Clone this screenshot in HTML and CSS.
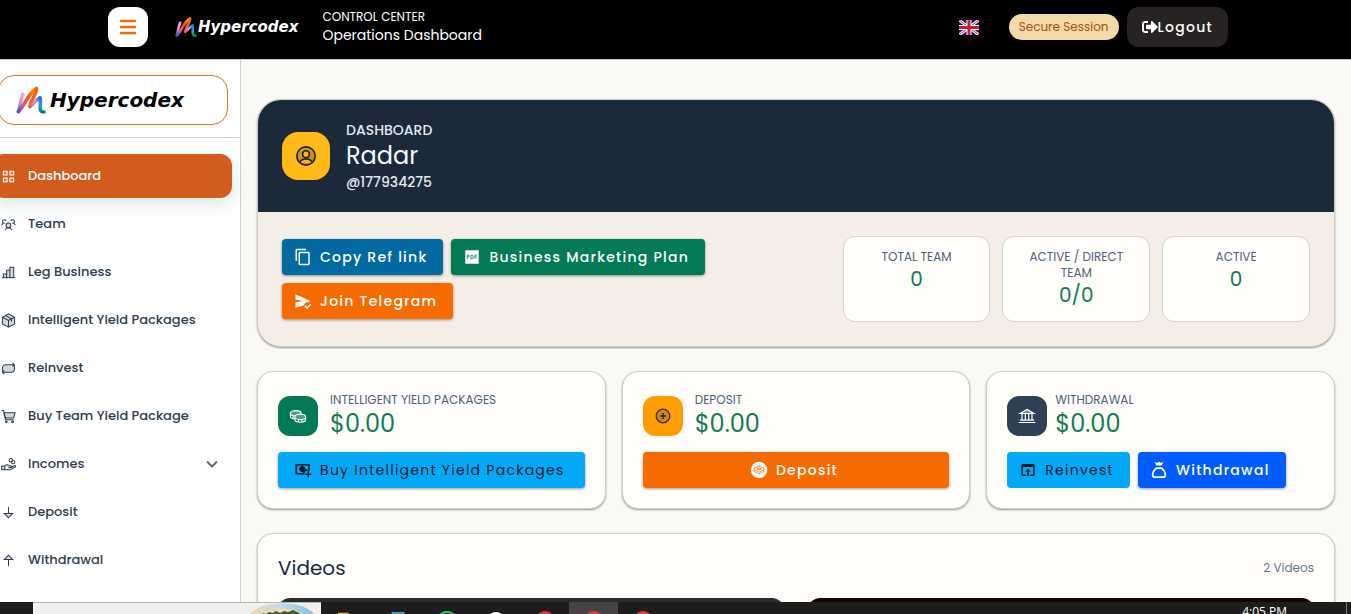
FILE: index.html
```html
<!DOCTYPE html>
<html lang="en">
<head>
<meta charset="utf-8">
<meta name="viewport" content="width=device-width, initial-scale=1">
<title>Hypercodex - Operations Dashboard</title>
<link rel="stylesheet" href="styles.css">
</head>
<body>
<svg class="defs" aria-hidden="true">
  <defs>
    <linearGradient id="gPink" x1="0" y1="0" x2="0" y2="1"><stop offset="0" stop-color="#f3a6c4"/><stop offset=".5" stop-color="#b79be0"/><stop offset="1" stop-color="#2a5fd0"/></linearGradient>
    <linearGradient id="gOrange" x1="1" y1="0" x2="0" y2="1"><stop offset="0" stop-color="#ffb400"/><stop offset=".4" stop-color="#f4511e"/><stop offset=".75" stop-color="#f0506e"/><stop offset="1" stop-color="#3b5bd6"/></linearGradient>
    <linearGradient id="gMid" x1="1" y1="0" x2="0" y2="1"><stop offset="0" stop-color="#3d7be8"/><stop offset=".5" stop-color="#c99be6"/><stop offset="1" stop-color="#ee5a5a"/></linearGradient>
    <linearGradient id="gBlue" x1="0" y1="0" x2="0" y2="1"><stop offset="0" stop-color="#2f6bea"/><stop offset=".55" stop-color="#1aa7e8"/><stop offset="1" stop-color="#0b8a50"/></linearGradient>
    <symbol id="mark" viewBox="0 0 30 28">
      <g fill="none" stroke-linecap="round" stroke-linejoin="round" stroke-width="3.600">
        <path d="M2.500 25.500C5 19 4 13 7 8.500" stroke="url(#gPink)"/>
        <path d="M2.500 25.500C9 19 13 6 20.500 2.500" stroke="url(#gOrange)"/>
        <path d="M20.500 2.500C21 7 15 14 14 20" stroke="#f4601c"/>
        <path d="M14 20.500C17 18.500 20 13.500 24 12" stroke="url(#gMid)"/>
        <path d="M24 12C26 16 21 26 28 26" stroke="url(#gBlue)"/>
      </g>
    </symbol>
  </defs>
</svg>

<header class="topbar">
  <button class="menu-btn" type="button" aria-label="Toggle menu">
    <svg viewBox="0 0 18 18" width="18" height="18"><path d="M2 3h14M2 9h14M2 15h14" stroke="#ea6d13" stroke-width="2.400" stroke-linecap="round"/></svg>
  </button>
  <a class="brand brand-top" href="#"><svg class="mark"><use href="#mark"/></svg><span>Hypercodex</span></a>
  <div class="titles">
    <span class="eyebrow">CONTROL CENTER</span>
    <span class="title">Operations Dashboard</span>
  </div>
  <div class="topbar-right">
    <svg class="flag" viewBox="0 0 60 45" role="img" aria-label="English">
      <path fill="#012169" d="M0 0h60v45H0z"/>
      <path d="M0 0l60 45M60 0L0 45" stroke="#fff" stroke-width="9"/>
      <path d="M0 0l60 45M60 0L0 45" stroke="#d8143a" stroke-width="3"/>
      <path d="M30 0v45M0 22.500h60" stroke="#fff" stroke-width="15"/>
      <path d="M30 0v45M0 22.500h60" stroke="#d8143a" stroke-width="9"/>
    </svg>
    <span class="session">Secure Session</span>
    <button class="logout" type="button">
      <svg viewBox="0 0 512 512" width="16" height="16" fill="currentColor"><path d="M497 273L329 441c-15 15-41 4.500-41-17v-96H152c-13 0-24-11-24-24v-96c0-13 11-24 24-24h136V88c0-21 26-32 41-17l168 168c9 9 9 25 0 34zM192 436v-40c0-7-5-12-12-12H96c-18 0-32-14-32-32V160c0-18 14-32 32-32h84c7 0 12-5 12-12V76c0-7-5-12-12-12H96c-53 0-96 43-96 96v192c0 53 43 96 96 96h84c7 0 12-5 12-12z"/></svg>Logout</button>
  </div>
</header>

<div class="shell">
  <aside class="sidebar">
    <div class="side-head"><a class="brand brand-side" href="#"><svg class="mark"><use href="#mark"/></svg><span>Hypercodex</span></a></div>
    <nav class="nav">
      <a class="nav-item active" href="#"><svg class="ni" viewBox="0 0 16 16"><path class="tint" d="M2.500 2.500h4v4h-4zM9.500 2.500h4v4h-4zM2.500 9.500h4v4h-4zM9.500 9.500h4v4h-4z"/></svg>Dashboard</a>
      <a class="nav-item" href="#"><svg class="ni" viewBox="0 0 16 16"><circle class="tint" cx="8" cy="9" r="2.500"/><path d="M4.300 14a4 4 0 0 1 7.400 0M5.500 4.200a2 2 0 1 0-3 2.300M.6 8.800c.5-1.500 1.700-2.300 3.400-2.300M10.500 4.200a2 2 0 1 1 3 2.300M15.400 8.800c-.5-1.500-1.700-2.300-3.400-2.300"/></svg>Team</a>
      <a class="nav-item" href="#"><svg class="ni" viewBox="0 0 16 16"><path class="tint" d="M2.500 13.500V9.500h3.500v4M6 13.500v-8h3.500v8M9.500 13.500v-11h4v11"/><path d="M1 13.500h14"/></svg>Leg Business</a>
      <a class="nav-item" href="#"><svg class="ni" viewBox="0 0 16 16"><path class="tint" d="M8 1l6.500 3.500v7.300L8 15.200l-6.500-3.400V4.500z"/><path d="M1.500 4.500L8 8l6.500-3.500M8 8v7M4.800 2.800l6.500 3.600v3"/></svg>Intelligent Yield Packages</a>
      <a class="nav-item" href="#"><svg class="ni" viewBox="0 0 16 16"><path class="tint" d="M1.500 8c0-2.500 1.500-4 4-4H14l.5 4c0 2.500-1.500 4-4 4H2z"/><path d="M12.300 2l2 2-2 2M3.700 10l-2 2 2 2"/></svg>Reinvest</a>
      <a class="nav-item" href="#"><svg class="ni" viewBox="0 0 16 16"><path class="tint" d="M3.300 4H15l-1.500 5.500H4.500z"/><path d="M.7 1.700h2L5 11.500h8.500"/><circle cx="5.700" cy="13.700" r="1"/><circle cx="12.300" cy="13.700" r="1"/></svg>Buy Team Yield Package</a>
      <a class="nav-item" href="#"><svg class="ni" viewBox="0 0 16 16"><path class="tint" d="M4 9.500c2-2 4-1 5 0h2c1 0 1 1.800 0 1.800H8M11.500 10.500l3-1.300c1.200-.4 1.500 1 .5 1.500l-5 3H.7V9.700H4v4"/><circle cx="13" cy="5.500" r="1.800"/><circle cx="10.500" cy="3.500" r="1.800"/></svg>Incomes
        <svg class="chev" viewBox="0 0 14 14"><path d="M2 4.500l5 5 5-5"/></svg></a>
      <a class="nav-item" href="#"><svg class="ni" viewBox="0 0 16 16"><path class="tint" d="M3.500 9h9L8 13.700z"/><path d="M8 2v7"/></svg>Deposit</a>
      <a class="nav-item" href="#"><svg class="ni" viewBox="0 0 16 16"><path class="tint" d="M3.500 7h9L8 2.300z"/><path d="M8 14V7"/></svg>Withdrawal</a>
    </nav>
  </aside>

  <main class="main">
    <section class="hero">
      <div class="hero-head">
        <span class="avatar"><svg viewBox="0 0 24 24" width="22" height="22" fill="none" stroke="#1c1f27" stroke-width="1.800"><circle cx="12" cy="12" r="10" fill="#c8941a"/><path d="M5.500 19c1.500-5 11.500-5 13 0" fill="#ffba18"/><circle cx="12" cy="10" r="3.700" fill="#ffba18"/></svg></span>
        <div class="who">
          <span class="who-label">DASHBOARD</span>
          <h1>Radar</h1>
          <span class="who-label">@177934275</span>
        </div>
      </div>
      <div class="hero-body">
        <div class="actions">
          <button class="btn blue" type="button"><svg viewBox="0 0 24 24"><path fill="currentColor" d="M16 1H4c-1.100 0-2 .9-2 2v14h2V3h12V1zm3 4H8c-1.100 0-2 .9-2 2v14c0 1.100.9 2 2 2h11c1.100 0 2-.9 2-2V7c0-1.100-.9-2-2-2zm0 16H8V7h11v14z"/></svg>Copy Ref link</button>
          <button class="btn green" type="button"><svg viewBox="0 0 24 24"><path fill="currentColor" d="M3 3h18v18H3z"/><path d="M5.500 14.500V9.500H8v2.500H5.500M10.500 9.500h1.500l1.500 1v3l-1.500 1h-1.500zM16 14.500v-5h3M16 12h2.500" fill="none" stroke="#027a55" stroke-width="1"/></svg>Business Marketing Plan</button>
          <button class="btn orange" type="button"><svg viewBox="0 0 24 24"><path fill="currentColor" d="M2 3l20 9-3.500 1.600-3 .4-3 4L2 21v-7l10-2-10-2z"/><path d="M14.500 18.500l3 3 5-5.500" fill="none" stroke="currentColor" stroke-width="2"/></svg>Join Telegram</button>
        </div>
        <div class="stats">
          <div class="stat"><span>TOTAL TEAM</span><strong>0</strong></div>
          <div class="stat"><span>ACTIVE / DIRECT TEAM</span><strong>0/0</strong></div>
          <div class="stat"><span>ACTIVE</span><strong>0</strong></div>
        </div>
      </div>
    </section>

    <div class="cards">
      <section class="card">
        <div class="card-top">
          <span class="tile tile-green"><svg viewBox="0 0 20 20" width="18" height="18" fill="none" stroke="#fff" stroke-width="1.200"><path d="M1.500 7v3.500c0 1.500 2.500 2.800 6 2.800"/><ellipse cx="7.500" cy="7" rx="6" ry="3" fill="#4aa184"/><path d="M4.500 10v2.500M6.500 11.500V14c0 1.500 2.500 3 6 3s6-1.500 6-3v-3"/><ellipse cx="12.500" cy="11" rx="6" ry="3" fill="#4aa184"/><path d="M10.500 14v2.600M14.500 14v2.600"/></svg></span>
          <div class="figure"><span>INTELLIGENT YIELD PACKAGES</span><strong>$0.00</strong></div>
        </div>
        <button class="btn sky wide" type="button"><svg viewBox="0 0 24 24"><path fill="currentColor" fill-rule="evenodd" d="M2 4h19v9h-3a4 4 0 0 0-4 5H2zM4 7v8a2 2 0 0 1 2 1h6v-1.500A4 4 0 1 1 15 10l2 1.500h2V7a2 2 0 0 1-1-1H6a2 2 0 0 1-2 1z"/><circle cx="11" cy="11" r="2.700" fill="currentColor"/><path d="M19 13.500v8M15 17.500h8" fill="none" stroke="currentColor" stroke-width="2"/></svg>Buy Intelligent Yield Packages</button>
      </section>
      <section class="card">
        <div class="card-top">
          <span class="tile tile-amber"><svg viewBox="0 0 16 16" width="16" height="16" fill="none" stroke="#3a2a10" stroke-width="1.300"><circle cx="8" cy="8" r="6.800" fill="#d18713"/><path d="M8 5v6M5 8h6" stroke-width="1.600"/></svg></span>
          <div class="figure"><span>DEPOSIT</span><strong>$0.00</strong></div>
        </div>
        <button class="btn orange wide" type="button"><svg viewBox="0 0 24 24"><circle cx="12" cy="12" r="11" fill="currentColor"/><path d="M12 6.500l6.500 3.500v3.500L12 17.500 5.500 13.500V10zM5.500 11.500L12 15l6.500-3.500M9 10.500l3-1.500 3 1.500-3 1.500z" fill="none" stroke="#f66b00" stroke-width="1"/></svg>Deposit</button>
      </section>
      <section class="card">
        <div class="card-top tight">
          <span class="tile tile-slate"><svg viewBox="0 0 18 16" width="18" height="16" fill="none" stroke="#fff" stroke-width="1.200"><path d="M2 5.500L9 1.500l7 4z" fill="#7c8997"/><path d="M4 6v6M7.300 6v6M10.700 6v6M14 6v6M2 12.200h14M.7 14.500h16.600"/></svg></span>
          <div class="figure"><span>WITHDRAWAL</span><strong>$0.00</strong></div>
        </div>
        <div class="pair">
          <button class="btn sky flat" type="button"><svg viewBox="0 0 24 24"><path fill="currentColor" d="M19 4H5c-1.100 0-2 .9-2 2v12c0 1.100.9 2 2 2h4v-2H5V8h14v10h-4v2h4c1.100 0 2-.9 2-2V6c0-1.100-.9-2-2-2zm-7 6l-4 4h3v6h2v-6h3l-4-4z"/></svg>Reinvest</button>
          <button class="btn royal" type="button"><svg viewBox="0 0 24 24"><path fill="currentColor" d="M6 1l3 1.500L12 1l3 1.500L18 1l-2.500 5h-7z"/><path d="M8.500 9.500h7c3 2.500 5 6 5 9 0 2-1 3-3 3h-11c-2 0-3-1-3-3 0-3 2-6.500 5-9z" fill="none" stroke="currentColor" stroke-width="2.300"/></svg>Withdrawal</button>
        </div>
      </section>
    </div>

    <section class="card videos">
      <div class="videos-head"><h2>Videos</h2><span>2 Videos</span></div>
      <div class="thumbs"><div class="thumb"></div><div class="thumb dark"></div></div>
    </section>
  </main>
</div>

<footer class="taskbar">
  <div class="tb-start"></div>
  <div class="tb-search"><div class="scene"><svg viewBox="0 0 74 40" width="74" height="40"><defs><linearGradient id="sky" x1="0" x2="1"><stop offset="0" stop-color="#f4d9a8"/><stop offset=".5" stop-color="#bfdde8"/><stop offset="1" stop-color="#7fbbe0"/></linearGradient></defs><ellipse cx="36" cy="20" rx="36" ry="20" fill="url(#sky)"/><ellipse cx="36" cy="23" rx="30" ry="17" fill="#f3dfb4"/><path d="M14 13l3-3 3 1 3-2 4 1 3-2 4 2 4-2 4 1 5-2 4 2 4 2 3 3v10H14z" fill="#4d5a2c"/></svg></div></div>
  <div class="tb-apps">
    <span class="app"><svg viewBox="0 0 24 24"><path d="M0 2h11l3 4h10v15H0z" fill="#f0b429"/></svg></span>
    <span class="app"><svg viewBox="0 0 24 24"><path d="M6 2h12v20H6z" fill="none" stroke="#3fa9dc" stroke-width="2"/></svg></span>
    <span class="app"><svg viewBox="0 0 24 24"><circle cx="12" cy="11" r="10" fill="none" stroke="#25c25f" stroke-width="2.500"/></svg></span>
    <span class="app"><svg viewBox="0 0 24 24"><circle cx="12" cy="11" r="10" fill="#fff"/></svg></span>
    <span class="app"><svg viewBox="0 0 24 24"><circle cx="12" cy="11" r="11" fill="#e0402f"/></svg></span>
    <span class="app current"><svg viewBox="0 0 24 24"><circle cx="12" cy="11" r="11" fill="#e0402f"/></svg></span>
    <span class="app"><svg viewBox="0 0 24 24"><circle cx="12" cy="11" r="11" fill="#e0402f"/></svg></span>
  </div>
  <span class="clock">4:05 PM</span>
</footer>
</body>
</html>
```
FILE: styles.css
```css
* { box-sizing: border-box; }
body {
  margin: 0;
  height: 100vh;
  display: flex;
  flex-direction: column;
  overflow: hidden;
  background: #faf9f5;
  color: #1b293b;
  font-family: Poppins, Inter, "Liberation Sans", sans-serif;
  font-size: 13px;
}
button { font: inherit; border: 0; cursor: pointer; }
a { color: inherit; text-decoration: none; }
h1, h2 { margin: 0; font-weight: 400; }
.defs { position: absolute; width: 0; height: 0; }

.topbar {
  flex: none;
  display: flex;
  align-items: center;
  padding: 7px 123px 12px 108px;
  background: #000;
  border-bottom: 1px solid #c9c9c9;
  color: #fff;
}
.menu-btn {
  display: grid;
  place-items: center;
  width: 40px;
  height: 40px;
  padding: 0;
  border-radius: 12px;
  background: #fff;
}
.brand { display: flex; align-items: center; font-family: "DejaVu Sans", sans-serif; font-style: italic; font-weight: 700; }
.brand-top { margin-left: 27px; gap: 1px; font-size: 15px; color: #fff; }
.brand-top .mark { width: 22px; height: 26px; }
.titles { display: flex; flex-direction: column; margin-left: 24px; }
.eyebrow { font-size: 12px; line-height: 16px; }
.title { font-size: 14px; line-height: 20px; }
.topbar-right { display: flex; align-items: center; margin-left: auto; }
.flag { width: 20px; height: 15px; margin-right: 30px; }
.session {
  padding: 3px 10px;
  border-radius: 13px;
  background: #f3dba9;
  color: #a84f14;
  font-size: 12px;
  line-height: 20px;
  white-space: nowrap;
}
.logout {
  display: flex;
  align-items: center;
  height: 40px;
  margin-left: 8px;
  padding: 0 15px;
  border-radius: 12px;
  background: #272322;
  color: #fff;
  font-size: 14px;
  font-weight: 500;
  letter-spacing: .09em;
}

.shell { flex: 1; min-height: 0; display: flex; overflow: hidden; }
.sidebar { flex: none; width: 241px; background: #fff; border-right: 1px solid #cfcfcf; }
.side-head { padding: 15px 12px 12px 0; border-bottom: 1px solid #cfcfcf; }
.brand-side {
  height: 50px;
  margin-left: -2px;
  padding-left: 17px;
  gap: 4px;
  border: 1px solid #d4791f;
  border-radius: 16px;
  color: #000;
  font-size: 20px;
}
.brand-side .mark { width: 30px; height: 28px; }
.nav { display: flex; flex-direction: column; gap: 4px; padding: 16px 8px 0 0; }
.nav-item {
  display: flex;
  align-items: center;
  height: 44px;
  gap: 12px;
  padding-left: 1px;
  color: #2c3e50;
  font-weight: 500;
}
.nav-item.active {
  margin-left: -8px;
  padding-left: 9px;
  border-radius: 12px;
  background: #d25b1e;
  color: #fff;
  box-shadow: 0 6px 16px rgba(20, 110, 90, .16);
}
.ni { width: 15px; height: 15px; fill: none; stroke: currentColor; stroke-width: 1.1; }
.tint { fill: currentColor; fill-opacity: .2; }
.chev { width: 14px; height: 14px; margin: 0 13px 0 auto; fill: none; stroke: #5f6b78; stroke-width: 2; }

.main {
  flex: 1;
  min-width: 0;
  display: flex;
  flex-direction: column;
  gap: 24px;
  padding: 39px 16px 0;
}
.hero, .card {
  flex: none;
  border: 1px solid #cfcfca;
  box-shadow: 0 1px 2px rgba(0, 0, 0, .4);
}
.hero { border-radius: 24px; overflow: hidden; background: #f4eee7; }
.hero-head { display: flex; align-items: center; gap: 16px; padding: 20px 24px; background: #1b293b; color: #f4f7fa; }
.avatar { display: grid; place-items: center; width: 48px; height: 48px; border-radius: 16px; background: #ffba18; }
.who { display: flex; flex-direction: column; }
.who-label { font-size: 14px; line-height: 20px; font-weight: 500; color: #e2e8f0; }
.who h1 { font-size: 24px; line-height: 32px; }
.hero-body { display: grid; grid-template-columns: 6fr 5fr; align-items: center; padding: 24px; }
.actions { display: flex; flex-wrap: wrap; gap: 8px; }

.btn {
  display: flex;
  align-items: center;
  justify-content: center;
  height: 36px;
  gap: 8px;
  padding: 0 16px 0 12px;
  border-radius: 4px;
  color: #fff;
  font-size: 14px;
  font-weight: 500;
  letter-spacing: .09em;
  white-space: nowrap;
  box-shadow: 0 1px 3px rgba(0, 0, 0, .4);
}
.btn svg { flex: none; width: 18px; height: 18px; }
.blue { background: #0369a1; }
.green { background: #027a55; }
.orange { background: #f66b00; }
.sky { background: #03a9f6; color: #0c1a28; font-weight: 400; }
.royal { background: #005cff; }
.flat { box-shadow: none; }
.wide { width: 100%; }

.stats { display: grid; grid-template-columns: repeat(3, 1fr); gap: 12px; }
.stat {
  display: flex;
  flex-direction: column;
  align-items: center;
  padding: 12px;
  border: 1px solid #d3d3c9;
  border-radius: 12px;
  background: #fffefa;
  text-align: center;
}
.stat span { font-size: 12px; line-height: 16px; color: #51607a; }
.stat strong { font-size: 20px; line-height: 28px; font-weight: 400; color: #137a55; }

.cards { flex: none; display: grid; grid-template-columns: repeat(3, 1fr); gap: 16px; }
.card { padding: 20px; border-radius: 16px; background: #fffefa; }
.card-top { display: flex; align-items: center; gap: 12px; margin-bottom: 12px; }
.card-top.tight { gap: 8px; }
.tile { display: grid; place-items: center; width: 40px; height: 40px; border-radius: 12px; }
.tile-green { background: #027a55; }
.tile-amber { background: #ff9d05; }
.tile-slate { background: #2f4156; }
.figure { display: flex; flex-direction: column; }
.figure span { font-size: 12px; line-height: 16px; color: #51607a; }
.figure strong { font-size: 24px; line-height: 32px; font-weight: 400; color: #137a55; }
.pair { display: flex; gap: 8px; }

.videos-head { display: flex; align-items: center; justify-content: space-between; margin-bottom: 16px; }
.videos-head h2 { font-size: 20px; line-height: 28px; }
.videos-head span { font-size: 12px; color: #64748b; }
.thumbs { display: grid; grid-template-columns: 1fr 1fr; gap: 24px; }
.thumb { height: 200px; border-radius: 12px; background: #2a2d2e; }
.thumb.dark { background: #160504; }

.taskbar { flex: none; display: flex; height: 12px; overflow: hidden; background: #1f1c1d; color: #fff; }
.tb-start { flex: none; width: 33px; }
.tb-search { flex: none; display: flex; justify-content: flex-end; width: 288px; height: 40px; background: #f0f0f0; border-top: 1px solid #b5b5b5; }
.scene { width: 75px; }
.tb-apps { display: flex; height: 40px; margin-left: 3px; }
.app { display: grid; place-items: center; width: 49px; }
.app.current { background: #474345; }
.app svg { width: 22px; height: 22px; }
.clock { height: 40px; margin-left: auto; margin-right: 4px; padding: 3px 59px 0 0; border-right: 1px solid #777; font-family: "Open Sans", sans-serif; font-size: 12px; line-height: 14px; white-space: nowrap; }
```
